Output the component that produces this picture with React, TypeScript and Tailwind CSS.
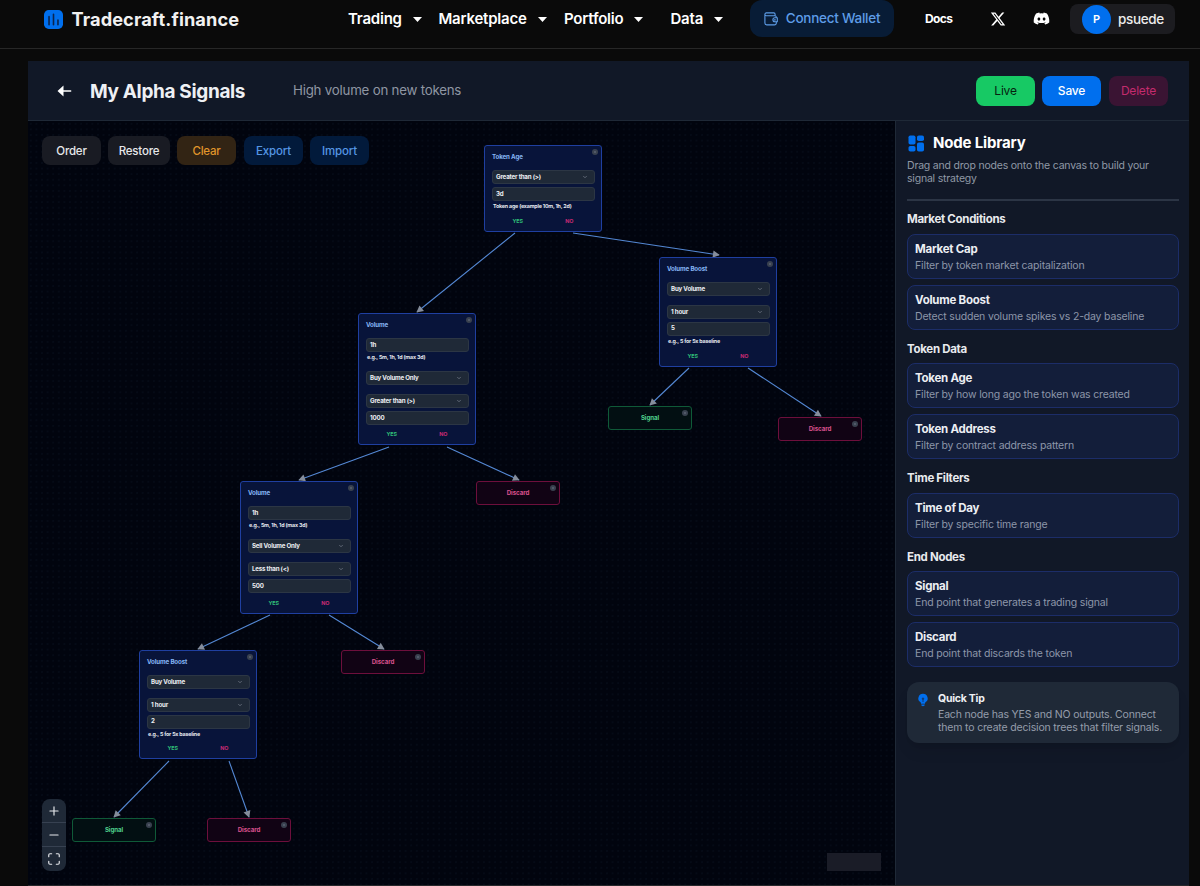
import { FaDiscord, FaXTwitter } from "react-icons/fa6";
import { ChevronDown, Maximize, Minus, Plus } from "lucide-react";

type Field = { kind: "select" | "input"; value: string; help?: string; spaced?: boolean };

type FilterNode = { id: string; title: string; box: string; fields: Field[] };

const filterNodes: FilterNode[] = [
  {
    id: "age",
    title: "Token Age",
    box: "left-[456px] top-[24px] h-[87px]",
    fields: [
      { kind: "select", value: "Greater than (>)" },
      { kind: "input", value: "3d", help: "Token age (example 10m, 1h, 2d)" },
    ],
  },
  {
    id: "boost-5x",
    title: "Volume Boost",
    box: "left-[631px] top-[136px] h-[110px]",
    fields: [
      { kind: "select", value: "Buy Volume" },
      { kind: "select", value: "1 hour", spaced: true },
      { kind: "input", value: "5", help: "e.g., 5 for 5x baseline" },
    ],
  },
  {
    id: "volume-buy",
    title: "Volume",
    box: "left-[330px] top-[192px] h-[132px]",
    fields: [
      { kind: "input", value: "1h", help: "e.g., 5m, 1h, 1d (max 3d)" },
      { kind: "select", value: "Buy Volume Only", spaced: true },
      { kind: "select", value: "Greater than (>)", spaced: true },
      { kind: "input", value: "1000" },
    ],
  },
  {
    id: "volume-sell",
    title: "Volume",
    box: "left-[212px] top-[360px] h-[133px]",
    fields: [
      { kind: "input", value: "1h", help: "e.g., 5m, 1h, 1d (max 3d)" },
      { kind: "select", value: "Sell Volume Only", spaced: true },
      { kind: "select", value: "Less than (<)", spaced: true },
      { kind: "input", value: "500" },
    ],
  },
  {
    id: "boost-2x",
    title: "Volume Boost",
    box: "left-[111px] top-[529px] h-[109px]",
    fields: [
      { kind: "select", value: "Buy Volume" },
      { kind: "select", value: "1 hour", spaced: true },
      { kind: "input", value: "2", help: "e.g., 5 for 5x baseline" },
    ],
  },
];

const endNodes = [
  { type: "Signal", pos: "left-[580px] top-[285px]" },
  { type: "Discard", pos: "left-[750px] top-[296px]" },
  { type: "Discard", pos: "left-[448px] top-[360px]" },
  { type: "Discard", pos: "left-[313px] top-[529px]" },
  { type: "Signal", pos: "left-[44px] top-[697px]" },
  { type: "Discard", pos: "left-[179px] top-[697px]" },
];

const edges = [
  [487, 112, 389, 191],
  [545, 112, 691, 134],
  [361, 326, 271, 359],
  [419, 326, 491, 359],
  [661, 247, 622, 284],
  [720, 247, 793, 295],
  [242, 494, 170, 528],
  [301, 494, 356, 528],
  [141, 640, 86, 696],
  [201, 640, 221, 696],
];

const library = [
  {
    name: "Market Conditions",
    items: [
      ["Market Cap", "Filter by token market capitalization"],
      ["Volume Boost", "Detect sudden volume spikes vs 2-day baseline"],
    ],
  },
  {
    name: "Token Data",
    items: [
      ["Token Age", "Filter by how long ago the token was created"],
      ["Token Address", "Filter by contract address pattern"],
    ],
  },
  { name: "Time Filters", items: [["Time of Day", "Filter by specific time range"]] },
  {
    name: "End Nodes",
    items: [
      ["Signal", "End point that generates a trading signal"],
      ["Discard", "End point that discards the token"],
    ],
  },
];

const menus = [
  { label: "Trading", width: "w-[90.5px]" },
  { label: "Marketplace", width: "w-[125.5px]" },
  { label: "Portfolio", width: "w-[106.5px]" },
  { label: "Data", width: "w-[79.5px]" },
];

function DeleteDot() {
  return (
    <span className="absolute right-[3px] top-[3px] flex h-[6px] w-[6px] items-center justify-center rounded-full bg-[#39414f]">
      <span className="h-[2px] w-[2px] rounded-full bg-[#5a6270]" />
    </span>
  );
}

function NodeField({ field }: { field: Field }) {
  return (
    <div className={field.spaced ? "pt-[6px]" : ""}>
      <div className="flex h-[14px] items-center justify-between rounded-[3px] border border-[#2c3644] bg-[#1f2937] pl-[3.5px] pr-[6px] text-[6.2px] font-bold leading-none tracking-[-0.2px] text-[#eceef2]">
        <span>{field.value}</span>
        {field.kind === "select" && <ChevronDown className="h-[6px] w-[6px] text-[#9aa1ae]" />}
      </div>
      {field.help && (
        <p className="h-[10.5px] whitespace-nowrap pl-[1.5px] pt-[2px] text-[5.3px] font-bold leading-[7px] tracking-[-0.17px] text-[#e6e9ef]">
          {field.help}
        </p>
      )}
    </div>
  );
}

function FilterNodeCard({ node }: { node: FilterNode }) {
  return (
    <div
      className={`absolute w-[118px] rounded-[3px] border border-[#1f3fa0] bg-[#08143a] px-[6.5px] ${node.box}`}
    >
      <DeleteDot />
      <p className="h-[24px] pl-[0.5px] pt-[7px] text-[6.2px] font-bold leading-[8px] tracking-[-0.14px] text-[#86b6f5]">
        {node.title}
      </p>
      <div className="flex flex-col gap-[2.8px]">
        {node.fields.map((f, i) => (
          <NodeField key={i} field={f} />
        ))}
      </div>
      <div className="absolute bottom-[6px] left-[7px] right-[6px] grid grid-cols-2 text-center text-[5.4px] font-bold leading-[7px] tracking-[-0.1px]">
        <span className="text-[#2fbf77]">YES</span>
        <span className="text-[#c92a73]">NO</span>
      </div>
    </div>
  );
}

function LogoIcon() {
  return (
    <svg viewBox="0 0 20 20" className="h-[19px] w-[19px]" fill="none">
      <rect width="20" height="20" rx="5" fill="#006fee" />
      <path d="M5.3 7v8.5M10 4.5v11M14.7 10.5v5" stroke="#0a2550" strokeWidth="1.7" strokeLinecap="round" />
    </svg>
  );
}

function WalletIcon() {
  return (
    <svg viewBox="0 0 14 14" className="h-[14px] w-[14px]" fill="none" stroke="currentColor" strokeWidth="1.1">
      <path d="M.9 2.3v8.8a1.8 1.8 0 0 0 1.8 1.8h7.8a1.8 1.8 0 0 0 1.8-1.8v-1.3M.9 2.300a1.400 1.400 0 0 1 1.400-1.400h7.500a1.300 1.300 0 0 1 1.300 1.300v1.500M.9 2.300a1.400 1.400 0 0 0 1.400 1.400h8.500a1.500 1.500 0 0 1 1.500 1.500v.6" />
      <path d="M13.3 5.8h-2.4a2 2 0 0 0 0 4h2.4z" strokeLinejoin="round" />
      <circle cx="10.9" cy="7.8" r=".3" fill="currentColor" />
    </svg>
  );
}

function Header() {
  return (
    <header className="flex h-[49px] shrink-0 items-start border-b border-[#272727] text-white">
      <div className="flex h-[38px] w-[348px] items-center gap-[9px] pl-[43.5px]">
        <LogoIcon />
        <span className="text-[18.2px] font-bold leading-none tracking-[0.1px] text-[#f1f1f1]">Tradecraft.finance</span>
      </div>
      <nav className="flex h-[38px] items-center">
        {menus.map((m) => (
          <button
            key={m.label}
            className={`flex items-center gap-[11px] text-[15px] font-semibold tracking-[-0.22px] ${m.width}`}
          >
            {m.label}
            <svg viewBox="0 0 9 5" className="h-[5px] w-[9px]" fill="currentColor">
              <path d="M0 0h9L4.5 5z" />
            </svg>
          </button>
        ))}
      </nav>
      <button className="flex h-[37px] w-[144px] items-center justify-center gap-[8px] rounded-[12px] bg-[#081c36] text-[13.5px] font-medium tracking-[-0.25px] text-[#5e9de8]">
        <WalletIcon />
        Connect Wallet
      </button>
      <div className="flex h-[37px] items-center pl-[31px]">
        <a className="w-[65px] pt-px text-[12px] font-bold tracking-[-0.6px]">Docs</a>
        <FaXTwitter className="h-[16px] w-[16px]" />
        <FaDiscord className="ml-[27px] h-[17px] w-[17px]" />
      </div>
      <div className="ml-[20px] mt-[4px] flex h-[30px] w-[105px] items-center gap-[7px] rounded-[8px] bg-[#1c1c20] pl-[12px]">
        <span className="flex h-[29px] w-[29px] items-center justify-center rounded-full bg-[#006fee] text-[11px] font-semibold">
          P
        </span>
        <span className="text-[13.5px] font-medium tracking-[-0.35px] text-[#ececec]">psuede</span>
      </div>
    </header>
  );
}

function StrategyBar() {
  return (
    <div className="flex h-[60px] shrink-0 items-center border-b border-[#1f2937] bg-[#111827] pl-[29px] pr-[21px]">
      <svg viewBox="0 0 15 12" className="h-[12px] w-[15px]" fill="#fff">
        <path d="M.5 6 6.5.5v4.8h7.2a.7.7 0 0 1 0 1.4H6.5v4.8z" />
      </svg>
      <h1 className="ml-[18px] w-[203px] pt-[2px] text-[19px] font-bold leading-none tracking-[-0.35px] text-[#eef0f4]">
        My Alpha Signals
      </h1>
      <span className="pt-px text-[13.3px] tracking-[-0.22px] text-[#8f96a3]">High volume on new tokens</span>
      <div className="ml-auto flex gap-[7px] text-[12px] tracking-[-0.2px]">
        <button className="h-[30px] w-[59px] rounded-[8px] bg-[#17c964] text-[#06210f]">Live</button>
        <button className="mr-px h-[30px] w-[59px] rounded-[8px] bg-[#006fee] font-medium text-white">Save</button>
        <button className="h-[30px] w-[59px] rounded-[8px] bg-[#3a1433] text-[#c42b6d]">Delete</button>
      </div>
    </div>
  );
}

function Canvas() {
  return (
    <div className="relative flex-1 overflow-hidden bg-[#01040e] bg-[radial-gradient(circle,#060c18_0.6px,transparent_0.9px)] bg-[size:5.6px_5.6px]">
      <svg className="absolute inset-0 h-full w-full" fill="none">
        <defs>
          <marker
            id="arrow"
            viewBox="0 0 8 8"
            refX="6.5"
            refY="4"
            markerWidth="8.5"
            markerHeight="8.5"
            markerUnits="userSpaceOnUse"
            orient="auto"
          >
            <path d="M0.8 0.6 7.2 4 0.8 7.4z" fill="#858d9b" />
          </marker>
        </defs>
        {edges.map(([x1, y1, x2, y2]) => (
          <line
            key={`${x1}-${x2}`}
            x1={x1}
            y1={y1}
            x2={x2}
            y2={y2}
            stroke="#5488d4"
            strokeWidth="1.1"
            markerEnd="url(#arrow)"
          />
        ))}
      </svg>

      {filterNodes.map((n) => (
        <FilterNodeCard key={n.id} node={n} />
      ))}

      {endNodes.map((n) => (
        <div
          key={n.pos}
          className={`absolute flex h-[24px] w-[84px] items-center justify-center rounded-[3px] border text-[6.2px] font-bold tracking-[-0.1px] ${n.pos} ${
            n.type === "Signal"
              ? "border-[#0f5a38] bg-[#020f12] text-[#4fd08d]"
              : "border-[#6d0f3c] bg-[#110314] text-[#d9508c]"
          }`}
        >
          {n.type}
          <DeleteDot />
        </div>
      ))}

      {/* Toolbar */}
      <div className="absolute left-[14px] top-[15px] flex gap-[7px] text-[11.5px] font-medium tracking-[-0.2px]">
        <button className="h-[29px] w-[59px] rounded-[8px] bg-[#191b23] pt-[2px] text-[#e6e7ea]">Order</button>
        <button className="h-[29px] w-[62px] rounded-[8px] bg-[#191b23] pt-[2px] text-[#e6e7ea]">Restore</button>
        <button className="mr-px h-[29px] w-[59px] rounded-[8px] bg-[#322414] pt-[2px] text-[#e0952a]">Clear</button>
        <button className="h-[29px] w-[59px] rounded-[8px] bg-[#021a3b] pt-[2px] text-[#5596e4]">Export</button>
        <button className="h-[29px] w-[59px] rounded-[8px] bg-[#021a3b] pt-[2px] text-[#5596e4]">Import</button>
      </div>

      {/* Zoom controls */}
      <div className="absolute bottom-[14px] left-[14px] flex w-[24px] flex-col divide-y divide-[#374151] overflow-hidden rounded-[8px] bg-[#1f2937] text-[#e5e7eb]">
        {[Plus, Minus, Maximize].map((Icon, i) => (
          <button key={i} className="flex h-[24px] items-center justify-center">
            <Icon className="h-[14px] w-[14px]" />
          </button>
        ))}
      </div>

      <div className="absolute bottom-[14px] right-[14px] h-[18px] w-[54px] bg-[#1a1c27]" />
    </div>
  );
}

function Sidebar() {
  return (
    <aside className="w-[294px] shrink-0 border-l border-[#1f2937] bg-[#111827] pl-[11px] pr-[10px]">
      <div className="flex items-center gap-[8px] pl-px pt-[11px]">
        <svg viewBox="0 0 17 17" className="h-[17px] w-[17px]" fill="#006fee">
          <rect x="0.5" y="0.5" width="7" height="9" rx="1.8" />
          <rect x="0.5" y="11" width="7" height="5.5" rx="1.8" />
          <rect x="9" y="0.5" width="7" height="5.5" rx="1.8" />
          <rect x="9" y="7.5" width="7" height="9" rx="1.8" />
        </svg>
        <h2 className="text-[15px] font-bold leading-[22px] tracking-[-0.17px] text-white">Node Library</h2>
      </div>
      <p className="mt-[5px] text-[10.5px] leading-[13px] tracking-[-0.2px] text-[#9098a6]">
        Drag and drop nodes onto the canvas to build your signal strategy
      </p>
      <div className="mb-[9px] mt-[14px] h-[2px] bg-[#2c3545]" />

      <div className="flex flex-col gap-[10px]">
        {library.map((group) => (
          <section key={group.name}>
            <h3 className="mb-[5.5px] text-[11.5px] font-bold leading-[18px] tracking-[-0.3px] text-[#e8eaee]">
              {group.name}
            </h3>
            <div className="flex flex-col gap-[6px]">
              {group.items.map(([name, desc]) => (
                <div key={name} className="h-[45px] rounded-[8px] border border-[#1c2d68] bg-[#131e3a] px-[7px] pt-[6px]">
                  <p className="text-[11.5px] font-bold leading-[17px] tracking-[-0.25px] text-[#eceef3]">{name}</p>
                  <p className="text-[10.5px] leading-[15px] tracking-[-0.18px] text-[#8d96a9]">{desc}</p>
                </div>
              ))}
            </div>
          </section>
        ))}
      </div>

      <div className="mt-[14.5px] flex h-[61px] gap-[9px] rounded-[12px] bg-[#1f2937] pl-[10px] pt-[8px] shadow-lg">
        <svg viewBox="0 0 12 14" className="mt-[3px] h-[14px] w-[12px]" fill="#006fee">
          <path d="M6 .8a4.6 4.6 0 0 0-2.8 8.3c.5.4.8.8.8 1.3v.4h4v-.4c0-.5.3-.9.8-1.3A4.6 4.6 0 0 0 6 .8zM4.3 11.4h3.4v.7c0 .7-.7 1.1-1.7 1.1s-1.7-.4-1.7-1.1z" />
          <path d="M6 4.2 7.4 5.8 6.5 7v2h-1V7l-.9-1.2z" fill="#123a75" />
        </svg>
        <div className="pt-px">
          <p className="mb-px text-[10.5px] font-bold leading-[16px] tracking-[-0.25px] text-[#eef0f4]">Quick Tip</p>
          <p className="whitespace-nowrap text-[10.5px] leading-[13px] tracking-[-0.17px] text-[#959dab]">
            Each node has YES and NO outputs. Connect
            <br />
            them to create decision trees that filter signals.
          </p>
        </div>
      </div>
    </aside>
  );
}

export default function App() {
  return (
    <div className="flex h-[886px] w-[1200px] flex-col overflow-hidden bg-[#0a0a0a] font-['Inter',sans-serif]">
      <Header />
      <main className="ml-[28px] mt-[12px] flex h-[825px] w-[1161px] flex-col border-b border-[#27272a]">
        <StrategyBar />
        <div className="flex min-h-0 flex-1">
          <Canvas />
          <Sidebar />
        </div>
      </main>
    </div>
  );
}
